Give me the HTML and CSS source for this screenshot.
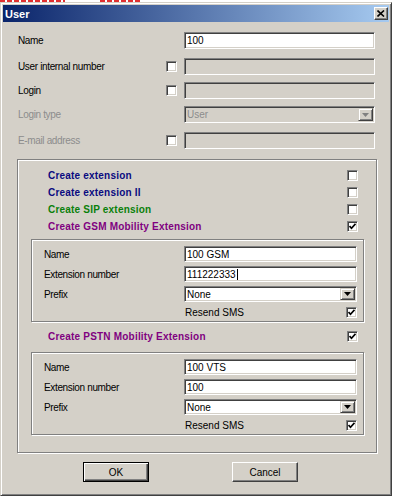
FILE: index.html
```html
<!DOCTYPE html>
<html>
<head>
    <title>User</title>
    <link rel="stylesheet" href="styles.css">
</head>
<body>
    <div class="marks">
        <span class="mark mark-a"></span>
        <span class="mark mark-b"></span>
    </div>

    <div class="dialog">
        <div class="titlebar">
            <span class="title">User</span>
            <span class="close">
                <svg width="8" height="7" viewBox="0 0 8 7"><path d="M0.5 0.5 L7 6.5 M7 0.5 L0.5 6.5" stroke="#000" stroke-width="1.6" fill="none"/></svg>
            </span>
        </div>

        <div class="content">
            <div class="row">
                <span class="label">Name</span>
                <span></span>
                <span class="field">100</span>
            </div>
            <div class="row row-b">
                <span class="label">User internal number</span>
                <span class="check"></span>
                <span class="field off"></span>
            </div>
            <div class="row row-c">
                <span class="label">Login</span>
                <span class="check"></span>
                <span class="field off"></span>
            </div>
            <div class="row row-c">
                <span class="label dim">Login type</span>
                <span></span>
                <span class="field off select">
                    <span class="dim">User</span>
                    <span class="drop"><svg width="7" height="4" viewBox="0 0 7 4"><path d="M0 0 H7 L3.5 4 Z" fill="#808080"/></svg></span>
                </span>
            </div>
            <div class="row row-b">
                <span class="label dim">E-mail address</span>
                <span class="check"></span>
                <span class="field off"></span>
            </div>

            <div class="group">
                <div class="opt navy"><span>Create extension</span><span class="check"></span></div>
                <div class="opt navy"><span>Create extension II</span><span class="check"></span></div>
                <div class="opt green"><span>Create SIP extension</span><span class="check"></span></div>
                <div class="opt purple">
                    <span>Create GSM Mobility Extension</span>
                    <span class="check"><svg width="7" height="7" viewBox="0 0 7 7"><path d="M0.5 3 L2.5 5.3 L6.5 0.8" stroke="#000" stroke-width="1.7" fill="none"/></svg></span>
                </div>

                <div class="box">
                    <div class="sub">
                        <span class="label">Name</span>
                        <span class="field">100 GSM</span>
                    </div>
                    <div class="sub">
                        <span class="label">Extension number</span>
                        <span class="field">111222333<span class="caret"></span></span>
                    </div>
                    <div class="sub">
                        <span class="label">Prefix</span>
                        <span class="field select">
                            <span>None</span>
                            <span class="drop"><svg width="7" height="4" viewBox="0 0 7 4"><path d="M0 0 H7 L3.5 4 Z" fill="#000"/></svg></span>
                        </span>
                    </div>
                    <div class="sub sms-row">
                        <span></span>
                        <span class="sms">
                            <span>Resend SMS</span>
                            <span class="check"><svg width="7" height="7" viewBox="0 0 7 7"><path d="M0.5 3 L2.5 5.3 L6.5 0.8" stroke="#000" stroke-width="1.7" fill="none"/></svg></span>
                        </span>
                    </div>
                </div>

                <div class="opt purple opt-pstn">
                    <span>Create PSTN Mobility Extension</span>
                    <span class="check"><svg width="7" height="7" viewBox="0 0 7 7"><path d="M0.5 3 L2.5 5.3 L6.5 0.8" stroke="#000" stroke-width="1.7" fill="none"/></svg></span>
                </div>

                <div class="box box-pstn">
                    <div class="sub">
                        <span class="label">Name</span>
                        <span class="field">100 VTS</span>
                    </div>
                    <div class="sub">
                        <span class="label">Extension number</span>
                        <span class="field">100</span>
                    </div>
                    <div class="sub">
                        <span class="label">Prefix</span>
                        <span class="field select">
                            <span>None</span>
                            <span class="drop"><svg width="7" height="4" viewBox="0 0 7 4"><path d="M0 0 H7 L3.5 4 Z" fill="#000"/></svg></span>
                        </span>
                    </div>
                    <div class="sub sms-row">
                        <span></span>
                        <span class="sms">
                            <span>Resend SMS</span>
                            <span class="check"><svg width="7" height="7" viewBox="0 0 7 7"><path d="M0.5 3 L2.5 5.3 L6.5 0.8" stroke="#000" stroke-width="1.7" fill="none"/></svg></span>
                        </span>
                    </div>
                </div>
            </div>

            <div class="buttons">
                <span class="btn default">OK</span>
                <span class="btn">Cancel</span>
            </div>
        </div>
    </div>
</body>
</html>
```

FILE: styles.css
```css
body {
    margin: 0;
    background: #fff;
    font-family: "Liberation Sans", Arial, sans-serif;
    font-size: 10px;
    color: #000;
}
.marks {
    display: flex;
    height: 2px;
}
.mark {
    height: 2px;
    background: repeating-linear-gradient(90deg, #e03030 0 5px, transparent 5px 7px);
}
.mark-a {
    width: 65px;
}
.mark-b {
    width: 40px;
    margin-left: 35px;
}
.dialog {
    width: 392px;
    height: 494px;
    box-sizing: border-box;
    padding: 2px;
    background: #d4d0c8;
    border: 1px solid;
    border-color: #d4d0c8 #404040 #404040 #d4d0c8;
    box-shadow: inset 1px 1px 0 #fff, inset -1px -1px 0 #808080;
}
.titlebar {
    height: 17px;
    display: flex;
    align-items: center;
    justify-content: space-between;
    padding: 0 1px 0 2px;
    background: linear-gradient(90deg, #0a246a, #a6caf0);
}
.title {
    color: #fff;
    font-weight: bold;
    font-size: 11px;
}
.close {
    width: 14px;
    height: 13px;
    box-sizing: border-box;
    display: flex;
    align-items: center;
    justify-content: center;
    background: #d4d0c8;
    border: 1px solid;
    border-color: #fff #404040 #404040 #fff;
    box-shadow: inset -1px -1px 0 #808080;
}
.content {
    padding: 10px 13px 0 15px;
}
.row {
    display: grid;
    grid-template-columns: 148px 18px 191px;
    align-items: center;
    height: 17px;
}
.row-b {
    margin-top: 9px;
}
.row-c {
    margin-top: 7px;
}
.label {
    letter-spacing: -0.35px;
}
.dim {
    color: #8c8c8c;
}
.field {
    height: 100%;
    box-sizing: border-box;
    display: flex;
    align-items: center;
    padding-left: 2px;
    background: #fff;
    border: 1px solid;
    border-color: #808080 #fff #fff #808080;
    box-shadow: inset 1px 1px 0 #404040, inset -1px -1px 0 #d4d0c8;
    white-space: nowrap;
}
.field.off {
    background: #d4d0c8;
}
.select {
    justify-content: space-between;
    padding-right: 1px;
}
.drop {
    width: 15px;
    height: calc(100% - 2px);
    box-sizing: border-box;
    display: flex;
    align-items: center;
    justify-content: center;
    background: #d4d0c8;
    border: 1px solid;
    border-color: #d4d0c8 #404040 #404040 #d4d0c8;
    box-shadow: inset 1px 1px 0 #fff, inset -1px -1px 0 #808080;
}
.caret {
    width: 1px;
    height: 11px;
    background: #000;
    margin-left: 1px;
}
.check {
    width: 11px;
    height: 11px;
    box-sizing: border-box;
    display: flex;
    align-items: center;
    justify-content: center;
    background: #fff;
    border: 1px solid;
    border-color: #808080 #fff #fff #808080;
    box-shadow: inset 1px 1px 0 #404040, inset -1px -1px 0 #d4d0c8;
}
.group,
.box {
    border: 1px solid #808080;
    box-shadow: 1px 1px 0 #fff, inset 1px 1px 0 #fff;
}
.group {
    width: 360px;
    box-sizing: border-box;
    height: 294px;
    margin: 10px 0 0 -1px;
    padding-top: 7px;
}
.opt {
    height: 17px;
    display: flex;
    align-items: center;
    justify-content: space-between;
    padding: 0 18px 0 30px;
    font-weight: bold;
    letter-spacing: 0.2px;
}
.navy {
    color: #0a0a80;
}
.green {
    color: #0a800a;
}
.purple {
    color: #800080;
}
.opt-pstn {
    margin-top: 6px;
}
.box {
    width: 333px;
    height: 83px;
    box-sizing: border-box;
    margin: 4px 0 0 13px;
    padding: 6px 6px 0 12px;
}
.box-pstn {
    margin-top: 7px;
}
.sub {
    display: grid;
    grid-template-columns: 140px 173px;
    align-items: center;
    height: 16px;
    margin-bottom: 4px;
}
.sms-row {
    height: 12px;
}
.sms {
    display: flex;
    align-items: center;
    justify-content: space-between;
    padding-left: 1px;
}
.buttons {
    display: flex;
    gap: 83px;
    padding: 9px 0 0 65px;
}
.btn {
    width: 66px;
    height: 20px;
    box-sizing: border-box;
    display: flex;
    align-items: center;
    justify-content: center;
    border: 1px solid;
    border-color: #fff #404040 #404040 #fff;
    box-shadow: inset -1px -1px 0 #808080;
}
.btn.default {
    border: 1px solid #000;
    box-shadow: inset 1px 1px 0 #fff, inset -1px -1px 0 #404040, inset -2px -2px 0 #808080;
}
```
